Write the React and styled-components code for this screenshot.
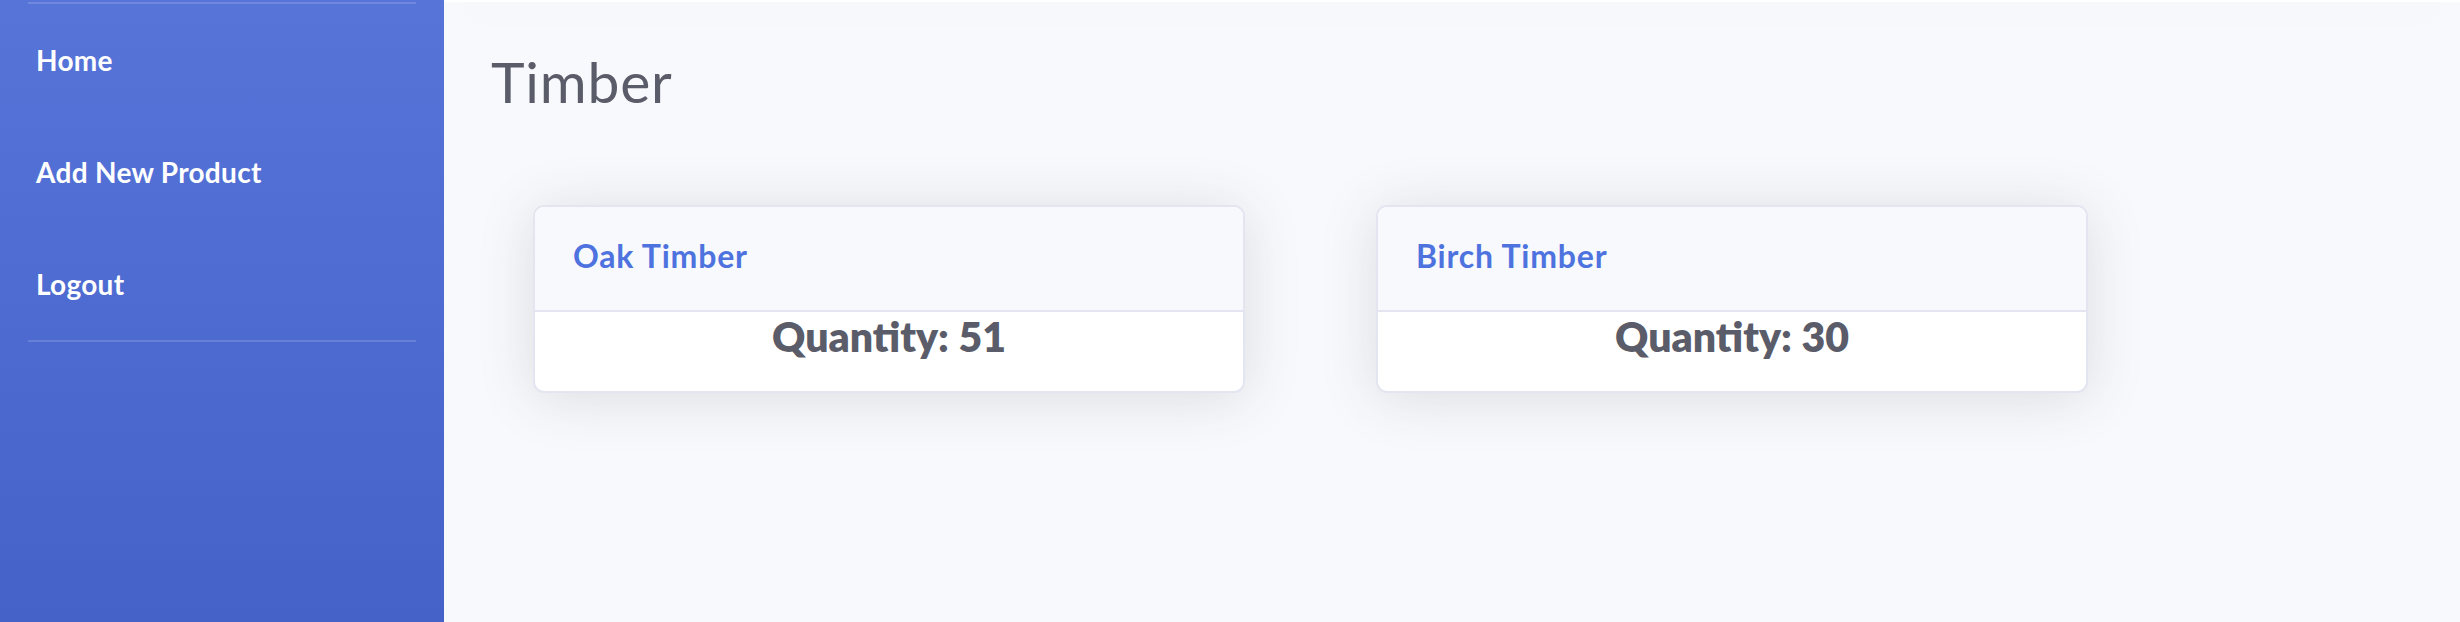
import React from "react";
import styled, { createGlobalStyle } from "styled-components";

const GlobalStyle = createGlobalStyle`
  html, body { margin: 0; padding: 0; }
  body {
    background: #f8f9fc;
    font-family: "Lato", "Noto Sans", sans-serif;
  }
  * { box-sizing: border-box; }
`;

const Wrapper = styled.div`
  display: flex;
  min-height: 622px;
`;

const Sidebar = styled.nav`
  width: 444px;
  flex-shrink: 0;
  background: linear-gradient(180deg, #5774d9 0%, #4562c9 100%);
  display: flex;
  flex-direction: column;
  padding-top: 2px;
`;

const Divider = styled.hr`
  margin: 0 28px;
  border: 0;
  height: 2px;
  background: rgba(255, 255, 255, 0.15);
`;

const NavList = styled.ul`
  list-style: none;
  margin: 0;
  padding: 0;
`;

const NavItem = styled.li`
  height: 112px;
  display: flex;
  align-items: center;
  padding-left: 36px;
`;

const NavLink = styled.a`
  color: #ffffff;
  font-family: "Lato", sans-serif;
  font-weight: 700;
  font-size: 28px;
  text-decoration: none;
  letter-spacing: 0.3px;
`;

const Main = styled.main`
  flex: 1;
  display: flex;
  flex-direction: column;
  background: #f8f9fc;
`;

const Topbar = styled.div`
  height: 2px;
  background: #ffffff;
  box-shadow: 0 5px 56px 0 rgba(58, 59, 69, 0.15);
  position: relative;
  z-index: 1;
`;

const Container = styled.div`
  padding: 0 48px 0 47px;
`;

const Title = styled.h1`
  margin: 45px 0 90px;
  font-family: "Lato", sans-serif;
  font-weight: 400;
  font-size: 57px;
  line-height: 1.2;
  letter-spacing: 0.8px;
  color: #5a5c69;
`;

const CardRow = styled.div`
  display: flex;
  gap: 131px;
  padding: 0 42px;
`;

const Card = styled.div`
  width: 712px;
  background: #ffffff;
  border: 2px solid #e3e6f0;
  border-radius: 11px;
  box-shadow: 0 5px 56px 0 rgba(58, 59, 69, 0.15);
  overflow: hidden;
`;

const CardHeader = styled.div`
  background: #f8f9fc;
  border-bottom: 2px solid #e3e6f0;
  padding: 30px 38px 34px;
`;

const CardTitle = styled.h6`
  margin: 0;
  font-family: "Lato", sans-serif;
  font-weight: 700;
  font-size: 32px;
  line-height: 1.2;
  letter-spacing: 0.8px;
  color: #4e73df;
`;

const CardBody = styled.div`
  padding: 0 0 30px;
  text-align: center;
`;

const Quantity = styled.h5`
  margin: 0;
  font-family: "Lato", sans-serif;
  font-weight: 800;
  font-size: 41px;
  line-height: 1.2;
  color: #5a5c69;
`;

const products = [
  { name: "Oak Timber", qty: 51 },
  { name: "Birch Timber", qty: 30 },
];

export default function App() {
  return (
    <>
      <GlobalStyle />
      <Wrapper>
        <Sidebar>
          <Divider />
          <NavList>
            <NavItem><NavLink href="#">Home</NavLink></NavItem>
            <NavItem><NavLink href="#">Add New Product</NavLink></NavItem>
            <NavItem><NavLink href="#">Logout</NavLink></NavItem>
          </NavList>
          <Divider />
        </Sidebar>
        <Main>
          <Topbar />
          <Container>
            <Title>Timber</Title>
            <CardRow>
              {products.map((p) => (
                <Card key={p.name}>
                  <CardHeader>
                    <CardTitle>{p.name}</CardTitle>
                  </CardHeader>
                  <CardBody>
                    <Quantity>Quantity: {p.qty}</Quantity>
                  </CardBody>
                </Card>
              ))}
            </CardRow>
          </Container>
        </Main>
      </Wrapper>
    </>
  );
}
